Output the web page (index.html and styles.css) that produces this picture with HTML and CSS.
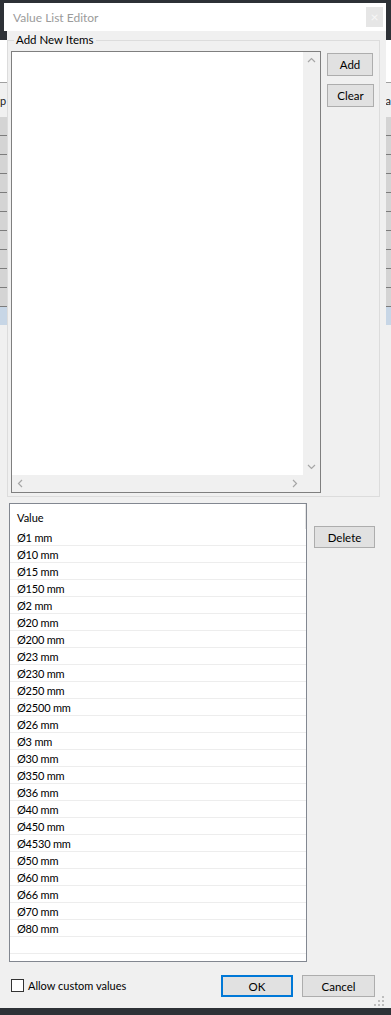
FILE: index.html
```html
<!DOCTYPE html>
<html lang="en">

<head>
    <meta charset="UTF-8">
    <meta name="viewport" content="width=device-width, initial-scale=1.0">
    <title>Value List Editor</title>
    <link rel="stylesheet" href="styles.css">
</head>

<body>
    <div class="desktop">
        <!-- window behind the dialog, only its edges show -->
        <div class="app-window">
            <div class="app-toolbar"></div>
            <div class="app-header"><span class="app-col-left">p</span><span class="app-col-right">a</span></div>
            <div class="app-rows">
                <div class="app-row"></div>
                <div class="app-row"></div>
                <div class="app-row"></div>
                <div class="app-row"></div>
                <div class="app-row"></div>
                <div class="app-row"></div>
                <div class="app-row"></div>
                <div class="app-row"></div>
                <div class="app-row"></div>
                <div class="app-row"></div>
                <div class="app-row selected"></div>
            </div>
        </div>

        <div class="dialog" role="dialog" aria-labelledby="dialog-title">
            <div class="titlebar">
                <span class="title" id="dialog-title">Value List Editor</span>
                <span class="close-btn">&times;</span>
            </div>
            <div class="dialog-body">
                <fieldset class="group">
                    <legend>Add New Items</legend>
                    <div class="group-inner">
                        <div class="memo">
                            <div class="memo-text"></div>
                            <div class="vscroll">
                                <svg class="arrow" width="17" height="17" viewBox="0 0 17 17"><path d="M5 10 L8.5 6.5 L12 10" /></svg>
                                <svg class="arrow" width="17" height="17" viewBox="0 0 17 17"><path d="M5 7 L8.5 10.5 L12 7" /></svg>
                            </div>
                            <div class="hscroll">
                                <svg class="arrow" width="17" height="17" viewBox="0 0 17 17"><path d="M10 5 L6.5 8.5 L10 12" /></svg>
                                <svg class="arrow" width="17" height="17" viewBox="0 0 17 17"><path d="M7 5 L10.5 8.5 L7 12" /></svg>
                            </div>
                            <div class="corner"></div>
                        </div>
                        <div class="side-buttons">
                            <button type="button" class="btn btn-add">Add</button>
                            <button type="button" class="btn btn-clear">Clear</button>
                        </div>
                    </div>
                </fieldset>

                <div class="values-area">
                    <div class="value-list">
                        <div class="list-header"><span class="list-header-cell">Value</span></div>
                        <div class="list-row">Ø1 mm</div>
                        <div class="list-row">Ø10 mm</div>
                        <div class="list-row">Ø15 mm</div>
                        <div class="list-row">Ø150 mm</div>
                        <div class="list-row">Ø2 mm</div>
                        <div class="list-row">Ø20 mm</div>
                        <div class="list-row">Ø200 mm</div>
                        <div class="list-row">Ø23 mm</div>
                        <div class="list-row">Ø230 mm</div>
                        <div class="list-row">Ø250 mm</div>
                        <div class="list-row">Ø2500 mm</div>
                        <div class="list-row">Ø26 mm</div>
                        <div class="list-row">Ø3 mm</div>
                        <div class="list-row">Ø30 mm</div>
                        <div class="list-row">Ø350 mm</div>
                        <div class="list-row">Ø36 mm</div>
                        <div class="list-row">Ø40 mm</div>
                        <div class="list-row">Ø450 mm</div>
                        <div class="list-row">Ø4530 mm</div>
                        <div class="list-row">Ø50 mm</div>
                        <div class="list-row">Ø60 mm</div>
                        <div class="list-row">Ø66 mm</div>
                        <div class="list-row">Ø70 mm</div>
                        <div class="list-row">Ø80 mm</div>
                        <div class="list-row"></div>
                    </div>
                    <button type="button" class="btn btn-delete">Delete</button>
                </div>

                <div class="footer">
                    <label class="check"><span class="check-box"></span>Allow custom values</label>
                    <div class="footer-buttons">
                        <button type="button" class="btn btn-ok">OK</button>
                        <button type="button" class="btn btn-cancel">Cancel</button>
                    </div>
                </div>

                <svg class="grip" width="10" height="10" viewBox="0 0 10 10">
                    <rect x="8" y="0" width="2" height="2" />
                    <rect x="4" y="4" width="2" height="2" />
                    <rect x="8" y="4" width="2" height="2" />
                    <rect x="0" y="8" width="2" height="2" />
                    <rect x="4" y="8" width="2" height="2" />
                    <rect x="8" y="8" width="2" height="2" />
                </svg>
            </div>
        </div>
    </div>
</body>

</html>
```

FILE: styles.css
```css
* {
    box-sizing: border-box;
}

body {
    margin: 0;
    background-color: #2d3136;
    font-family: Lato, "Noto Sans", sans-serif;
    font-size: 11px;
    color: #000;
}

.desktop {
    position: relative;
    width: 391px;
    height: 1015px;
    overflow: hidden;
}

/* background application window */
.app-window {
    position: absolute;
    left: 0;
    top: 40px;
    width: 391px;
    height: 968px;
    background: #f0f0f0;
}

.app-toolbar {
    height: 43px;
    margin-top: 0;
    background: #fff;
    border-bottom: 1px solid #a0a0a0;
}

.app-header {
    height: 34px;
    display: flex;
    justify-content: space-between;
    align-items: center;
    font-size: 11px;
    color: #222;
}

.app-col-left {
    margin-left: 0;
}

.app-col-right {
    margin-right: 0;
}

.app-row {
    height: 19px;
    background: #d4d4d4;
    border-bottom: 1px solid #7c7c7c;
}

.app-row.selected {
    height: 18px;
    background: #c7d6e6;
    border-bottom: none;
}

/* dialog */
.dialog {
    position: absolute;
    left: 0;
    top: 3px;
    width: 386px;
}

.titlebar {
    margin-left: 4px;
    height: 28px;
    background: #fff;
    display: flex;
    align-items: center;
    justify-content: space-between;
    padding-left: 9px;
    padding-right: 3px;
}

.title {
    color: #9b9b9b;
    font-size: 12px;
}

.close-btn {
    width: 17px;
    height: 20px;
    background: #e6e6e6;
    color: #f7f7f7;
    font-size: 14px;
    line-height: 19px;
    text-align: center;
}

.dialog-body {
    position: relative;
    margin-left: 7px;
    height: 977px;
    background: #f0f0f0;
    padding-top: 1px;
}

.group {
    margin: 0;
    width: 373px;
    min-width: 0;
    border: 1px solid #dcdcdc;
    padding: 3px 5px 3px 3px;
}

.group legend {
    margin-left: 3px;
    padding: 0 2px;
    line-height: 16px;
    font-size: 11.5px;
}

.group-inner {
    display: flex;
    gap: 6px;
}

.memo {
    width: 310px;
    height: 442px;
    border: 1px solid #7f7f7f;
    background: #fff;
    display: grid;
    grid-template-columns: 1fr 17px;
    grid-template-rows: 1fr 17px;
}

.vscroll,
.hscroll,
.corner {
    background: #f0f0f0;
}

.vscroll {
    display: flex;
    flex-direction: column;
    justify-content: space-between;
}

.hscroll {
    display: flex;
    justify-content: space-between;
}

.arrow {
    display: block;
}

.arrow path {
    fill: none;
    stroke: #a6a6a6;
    stroke-width: 1.2;
}

.side-buttons {
    display: flex;
    flex-direction: column;
    gap: 8px;
    padding-top: 2px;
    width: 47px;
}

.btn {
    font-family: Lato, "Noto Sans", sans-serif;
    font-size: 11.5px;
    color: #000;
    background: #e1e1e1;
    border: 1px solid #adadad;
    padding: 0;
    height: 23px;
}

.btn-add {
    width: 46px;
}

.btn-clear {
    width: 47px;
}

.values-area {
    display: flex;
    align-items: flex-start;
    margin-top: 6px;
    padding-left: 2px;
    gap: 7px;
}

.value-list {
    width: 298px;
    height: 459px;
    border: 1px solid #828790;
    background: #fff;
    overflow: hidden;
}

.list-header {
    height: 25px;
    display: flex;
}

.list-header-cell {
    width: 296px;
    border-right: 1px solid #e5e5e5;
    padding-left: 7px;
    padding-top: 1px;
    line-height: 25px;
}

.list-row {
    height: 17px;
    padding-top: 1px;
    line-height: 15px;
    padding-left: 7px;
    letter-spacing: -0.2px;
    border-bottom: 1px solid #ededed;
}

.btn-delete {
    width: 61px;
    height: 22px;
    margin-top: 23px;
}

.footer {
    margin-top: 13px;
    height: 22px;
    display: flex;
    align-items: center;
    justify-content: space-between;
    padding: 0 11px 0 4px;
}

.check {
    display: flex;
    align-items: center;
    gap: 4px;
    margin-top: -1px;
}

.check-box {
    width: 13px;
    height: 13px;
    border: 1px solid #333;
    background: #fff;
}

.footer-buttons {
    display: flex;
    gap: 9px;
}

.btn-ok {
    width: 72px;
    height: 22px;
    border: 2px solid #0078d7;
}

.btn-cancel {
    width: 73px;
    height: 22px;
}

.grip {
    position: absolute;
    right: 2px;
    bottom: 2px;
    fill: #bdbdbd;
}
```
